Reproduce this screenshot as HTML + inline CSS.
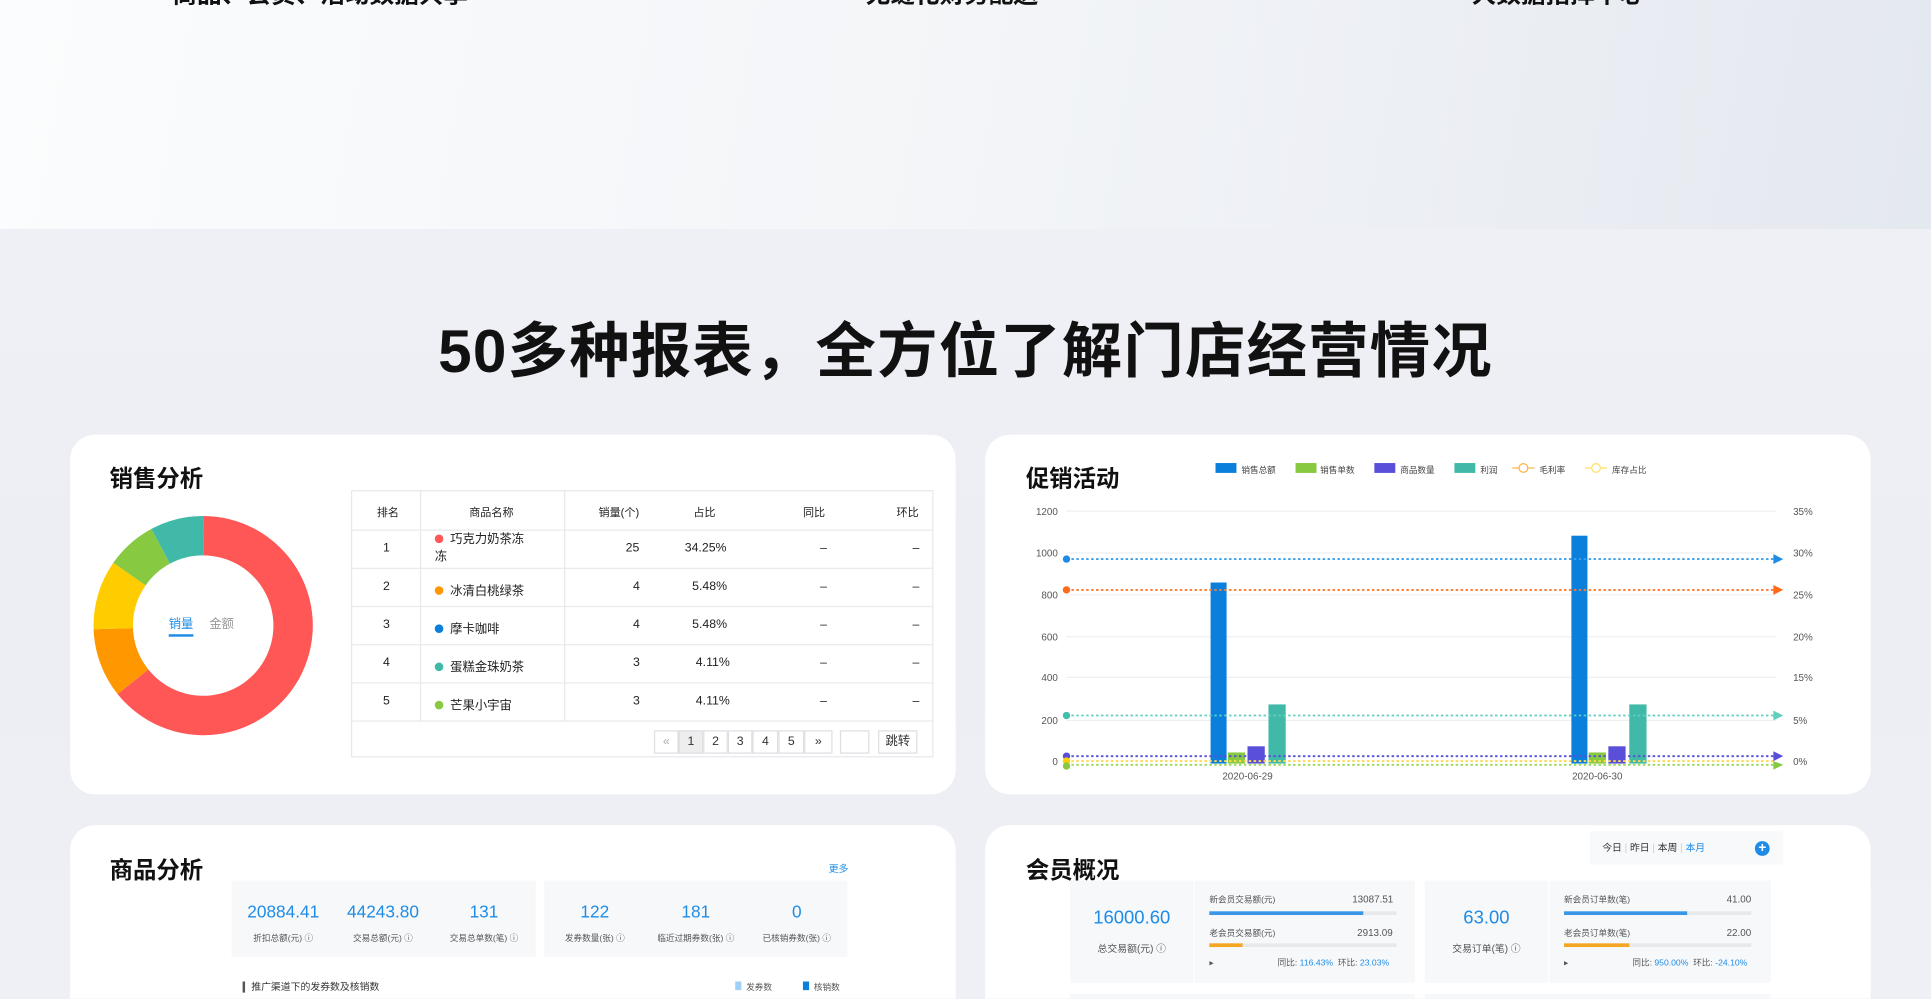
<!DOCTYPE html>
<html><head><meta charset="utf-8"><style>
html,body{margin:0;padding:0;width:1931px;height:999px;overflow:hidden;background:#eef0f5;}
*{box-sizing:border-box;}
#w{position:absolute;left:0;top:0;width:1568px;height:811px;transform:scale(1.23151);transform-origin:0 0;font-family:"Liberation Sans","Noto Sans CJK SC",sans-serif;color:#222;
background:linear-gradient(180deg,#eef0f5 186px,#eceef4 500px,#eef0f5 811px);overflow:hidden;}
.top{position:absolute;left:0;top:0;width:1568px;height:186px;background:linear-gradient(100deg,#fbfcfd 0%,#f3f5f8 50%,#e4e8ef 100%);overflow:hidden;}
.tt{position:absolute;top:-21px;font-size:20px;font-weight:bold;color:#111;}
.card{position:absolute;background:#fff;border-radius:20px;}
.ct{position:absolute;font-size:19px;font-weight:bold;color:#111;}
.abs{position:absolute;}
.tb{position:absolute;left:285px;top:398px;width:473px;height:217px;border:1px solid #e6e8eb;}
.row{position:absolute;left:0;width:471px;height:31px;border-bottom:1px solid #e8eaed;font-size:10px;}
.row span{position:absolute;top:9px;}
.dot{display:inline-block;width:7px;height:7px;border-radius:50%;}
.pg{position:absolute;top:593px;height:19px;border:1px solid #dcdfe3;font-size:10px;text-align:center;line-height:17px;color:#333;background:#fff;}
.sb{position:absolute;background:#f7f8fa;}
.num{position:absolute;color:#1e8ce6;font-size:14px;text-align:center;}
.lab{position:absolute;font-size:7px;color:#555;text-align:center;}
</style></head><body><div id="w">
<div class="top">
<div class="tt" style="left:140px">商品、会员、活动数据共享</div>
<div class="tt" style="left:703px">无缝化财务配送</div>
<div class="tt" style="left:1195px">大数据指挥中心</div>
</div>
<div class="abs" style="left:0;width:1568px;top:255px;text-align:center;font-size:49px;font-weight:bold;color:#111;letter-spacing:1px;line-height:62px">50多种报表，全方位了解门店经营情况</div>

<!-- card 1 -->
<div class="card" style="left:57px;top:353px;width:719px;height:292px"></div>
<div class="ct" style="left:89px;top:374px">销售分析</div>
<svg class="abs" style="left:0;top:0" width="780" height="650">
<g transform="translate(165,508)">
<path d="M0,-89 A89,89 0 1 1 -69.5,55.6 L-44.5,35.6 A57,57 0 1 0 0,-57Z" fill="#ff5656"/>
<path d="M-69.5,55.6 A89,89 0 0 1 -89,3 L-57,2 A57,57 0 0 0 -44.5,35.6Z" fill="#ff9800"/>
<path d="M-89,3 A89,89 0 0 1 -73,-51 L-46.7,-32.7 A57,57 0 0 0 -57,2Z" fill="#ffcc00"/>
<path d="M-73,-51 A89,89 0 0 1 -42,-78.5 L-27,-50.3 A57,57 0 0 0 -46.7,-32.7Z" fill="#87c940"/>
<path d="M-42,-78.5 A89,89 0 0 1 0,-89 L0,-57 A57,57 0 0 0 -27,-50.3Z" fill="#40b9a8"/>
</g>
<text x="137" y="510" font-size="10" fill="#1e8ce6" font-family="Liberation Sans,Noto Sans CJK SC,sans-serif">销量</text>
<rect x="137" y="515" width="20" height="2" fill="#1e8ce6"/>
<text x="170" y="510" font-size="10" fill="#999" font-family="Liberation Sans,Noto Sans CJK SC,sans-serif">金额</text>
</svg>
<div class="tb">
<div style="position:absolute;left:55px;top:0;width:1px;height:187px;background:#e6e8eb"></div>
<div style="position:absolute;left:172px;top:0;width:1px;height:187px;background:#e6e8eb"></div>
<div class="row" style="top:0;height:32px;font-size:9px"><span style="left:20px;top:10px">排名</span><span style="left:95px;top:10px">商品名称</span><span style="left:200px;top:10px">销量(个)</span><span style="left:277px;top:10px">占比</span><span style="left:366px;top:10px">同比</span><span style="left:442px;top:10px">环比</span></div>
<div class="row" style="top:32px"><span style="left:25px">1</span><span style="left:67px;top:1px;width:90px;line-height:14px"><i class="dot" style="background:#ff5656"></i>&nbsp; 巧克力奶茶冻<br>冻</span><span style="left:222px">25</span><span style="left:270px">34.25%</span><span style="left:380px">–</span><span style="left:455px">–</span></div>
<div class="row" style="top:63px"><span style="left:25px">2</span><span style="left:67px"><i class="dot" style="background:#ff9800"></i>&nbsp; 冰清白桃绿茶</span><span style="left:228px">4</span><span style="left:276px">5.48%</span><span style="left:380px">–</span><span style="left:455px">–</span></div>
<div class="row" style="top:94px"><span style="left:25px">3</span><span style="left:67px"><i class="dot" style="background:#0a7fdb"></i>&nbsp; 摩卡咖啡</span><span style="left:228px">4</span><span style="left:276px">5.48%</span><span style="left:380px">–</span><span style="left:455px">–</span></div>
<div class="row" style="top:125px"><span style="left:25px">4</span><span style="left:67px"><i class="dot" style="background:#40b9a8"></i>&nbsp; 蛋糕金珠奶茶</span><span style="left:228px">3</span><span style="left:279px">4.11%</span><span style="left:380px">–</span><span style="left:455px">–</span></div>
<div class="row" style="top:156px"><span style="left:25px">5</span><span style="left:67px"><i class="dot" style="background:#87c940"></i>&nbsp; 芒果小宇宙</span><span style="left:228px">3</span><span style="left:279px">4.11%</span><span style="left:380px">–</span><span style="left:455px">–</span></div>
</div>
<div class="pg" style="left:531px;width:20px;color:#aaa">«</div>
<div class="pg" style="left:551px;width:20px;background:#eee">1</div>
<div class="pg" style="left:571px;width:20px">2</div>
<div class="pg" style="left:591px;width:20px">3</div>
<div class="pg" style="left:611px;width:21px">4</div>
<div class="pg" style="left:632px;width:21px">5</div>
<div class="pg" style="left:653px;width:23px">»</div>
<div class="pg" style="left:682px;width:24px"></div>
<div class="pg" style="left:713px;width:32px">跳转</div>

<!-- card 2 -->
<div class="card" style="left:800px;top:353px;width:719px;height:292px"></div>
<div class="ct" style="left:833px;top:374px">促销活动</div>
<svg class="abs" style="left:0;top:0" width="1568" height="650" font-family="Liberation Sans,Noto Sans CJK SC,sans-serif" font-size="8" fill="#555">
<g font-size="7" fill="#444">
<rect x="987" y="376" width="17" height="8" fill="#0a7fdb"/><text x="1008" y="384">销售总额</text>
<rect x="1052" y="376" width="17" height="8" fill="#87c940"/><text x="1072" y="384">销售单数</text>
<rect x="1116" y="376" width="17" height="8" fill="#5a4fd8"/><text x="1137" y="384">商品数量</text>
<rect x="1181" y="376" width="17" height="8" fill="#40b9a8"/><text x="1202" y="384">利润</text>
<line x1="1228" y1="380" x2="1246" y2="380" stroke="#ffb347"/><circle cx="1237" cy="380" r="3.5" fill="#fff" stroke="#ffb347"/><text x="1250" y="384">毛利率</text>
<line x1="1287" y1="380" x2="1305" y2="380" stroke="#ffe066"/><circle cx="1296" cy="380" r="3.5" fill="#fff" stroke="#ffe066"/><text x="1309" y="384">库存占比</text>
</g>
<g stroke="#eeeff1"><line x1="866" y1="415" x2="1442" y2="415"/><line x1="866" y1="449" x2="1442" y2="449"/><line x1="866" y1="483" x2="1442" y2="483"/><line x1="866" y1="517" x2="1442" y2="517"/><line x1="866" y1="550" x2="1442" y2="550"/><line x1="866" y1="585" x2="1442" y2="585"/></g>
<g text-anchor="end"><text x="859" y="418">1200</text><text x="859" y="452">1000</text><text x="859" y="486">800</text><text x="859" y="520">600</text><text x="859" y="553">400</text><text x="859" y="588">200</text><text x="859" y="621">0</text></g>
<g><text x="1456" y="418">35%</text><text x="1456" y="452">30%</text><text x="1456" y="486">25%</text><text x="1456" y="520">20%</text><text x="1456" y="553">15%</text><text x="1456" y="588">5%</text><text x="1456" y="621">0%</text></g>
<rect x="983" y="473" width="13" height="147" fill="#0a7fdb"/>
<rect x="997" y="611" width="14" height="9" fill="#87c940"/>
<rect x="1013" y="606" width="14" height="14" fill="#5a4fd8"/>
<rect x="1030" y="572" width="14" height="48" fill="#40b9a8"/>
<rect x="1276" y="435" width="13" height="185" fill="#0a7fdb"/>
<rect x="1290" y="611" width="14" height="9" fill="#87c940"/>
<rect x="1306" y="606" width="14" height="14" fill="#5a4fd8"/>
<rect x="1323" y="572" width="14" height="48" fill="#40b9a8"/>
<g stroke-dasharray="2,2" stroke-width="1.5">
<line x1="866" y1="454" x2="1440" y2="454" stroke="#3aa0ef"/>
<line x1="866" y1="479" x2="1440" y2="479" stroke="#ff7a2e"/>
<line x1="866" y1="581" x2="1440" y2="581" stroke="#5fd0bd"/>
<line x1="866" y1="614" x2="1440" y2="614" stroke="#5a4fd8"/>
<line x1="866" y1="618" x2="1440" y2="618" stroke="#ffd84d"/>
<line x1="866" y1="621" x2="1440" y2="621" stroke="#9ad85a"/>
</g>
<circle cx="866" cy="454" r="3" fill="#1e8ce6"/><path d="M1440,450 L1448,454 L1440,458Z" fill="#1e8ce6"/>
<circle cx="866" cy="479" r="3" fill="#ff6a1a"/><path d="M1440,475 L1448,479 L1440,483Z" fill="#ff6a1a"/>
<circle cx="866" cy="581" r="3" fill="#40c0aa"/><path d="M1440,577 L1448,581 L1440,585Z" fill="#5fd0bd"/>
<circle cx="866" cy="614" r="3" fill="#5a4fd8"/><path d="M1440,610 L1448,614 L1440,618Z" fill="#5a4fd8"/>
<circle cx="866" cy="618" r="3" fill="#ffd000"/><circle cx="866" cy="622" r="3" fill="#87c940"/><path d="M1440,618 L1448,621 L1440,625Z" fill="#87c940"/>
<text x="1013" y="633" text-anchor="middle">2020-06-29</text>
<text x="1297" y="633" text-anchor="middle">2020-06-30</text>
</svg>

<!-- card 3 -->
<div class="card" style="left:57px;top:670px;width:719px;height:141px;border-radius:20px 20px 0 0"></div>
<div class="ct" style="left:89px;top:692px">商品分析</div>
<div class="abs" style="left:673px;top:700px;font-size:8px;color:#1e8ce6">更多</div>
<div class="sb" style="left:188px;top:715px;width:247px;height:62px"></div>
<div class="sb" style="left:442px;top:715px;width:246px;height:62px"></div>
<div class="num" style="left:190px;top:732px;width:80px">20884.41</div>
<div class="num" style="left:270px;top:732px;width:82px">44243.80</div>
<div class="num" style="left:352px;top:732px;width:82px">131</div>
<div class="num" style="left:442px;top:732px;width:82px">122</div>
<div class="num" style="left:524px;top:732px;width:82px">181</div>
<div class="num" style="left:606px;top:732px;width:82px">0</div>
<div class="lab" style="left:190px;top:757px;width:80px">折扣总额(元) ⓘ</div>
<div class="lab" style="left:270px;top:757px;width:82px">交易总额(元) ⓘ</div>
<div class="lab" style="left:352px;top:757px;width:82px">交易总单数(笔) ⓘ</div>
<div class="lab" style="left:442px;top:757px;width:82px">发券数量(张) ⓘ</div>
<div class="lab" style="left:524px;top:757px;width:82px">临近过期券数(张) ⓘ</div>
<div class="lab" style="left:606px;top:757px;width:82px">已核销券数(张) ⓘ</div>
<div class="abs" style="left:197px;top:797px;font-size:8px;color:#333;border-left:2px solid #555;padding-left:5px;line-height:9px">推广渠道下的发券数及核销数</div>
<div class="abs" style="left:597px;top:797px;font-size:7px;color:#555"><i style="display:inline-block;width:5px;height:7px;background:#9fd0f7"></i>&nbsp; 发券数</div>
<div class="abs" style="left:652px;top:797px;font-size:7px;color:#555"><i style="display:inline-block;width:5px;height:7px;background:#0a7fdb"></i>&nbsp; 核销数</div>

<!-- card 4 -->
<div class="card" style="left:800px;top:670px;width:719px;height:141px;border-radius:20px 20px 0 0"></div>
<div class="ct" style="left:833px;top:692px">会员概况</div>
<div class="sb" style="left:1291px;top:675px;width:157px;height:27px;background:#f8f9fa;font-size:8px;color:#333;line-height:27px;padding-left:10px">今日 <span style="color:#ccc">|</span> 昨日 <span style="color:#ccc">|</span> 本周 <span style="color:#ccc">|</span> <span style="color:#1e8ce6">本月</span></div>
<div class="abs" style="left:1425px;top:683px;width:12px;height:12px;border-radius:50%;background:#1e8ce6;color:#fff;font-size:11px;line-height:12px;text-align:center;font-weight:bold">+</div>

<div class="sb" style="left:869px;top:715px;width:280px;height:83px"></div>
<div class="abs" style="left:969px;top:715px;width:1px;height:83px;background:#fff"></div>
<div class="num" style="left:869px;top:737px;width:100px;font-size:15px">16000.60</div>
<div class="lab" style="left:869px;top:765px;width:100px;font-size:8px">总交易额(元) ⓘ</div>
<div class="abs" style="left:982px;top:726px;font-size:7px;color:#555">新会员交易额(元)</div><div class="abs" style="left:1098px;top:726px;font-size:8px;color:#555">13087.51</div>
<div class="abs" style="left:982px;top:740px;width:152px;height:3px;background:#e8e9eb"><div style="width:125px;height:3px;background:#3a97e8"></div></div>
<div class="abs" style="left:982px;top:753px;font-size:7px;color:#555">老会员交易额(元)</div><div class="abs" style="left:1102px;top:753px;font-size:8px;color:#555">2913.09</div>
<div class="abs" style="left:982px;top:766px;width:152px;height:3px;background:#e8e9eb"><div style="width:27px;height:3px;background:#f5a623"></div></div>
<div class="abs" style="left:982px;top:777px;font-size:7px;color:#555">▸ <span style="margin-left:50px">同比: <span style="color:#1e8ce6">116.43%</span> &nbsp;环比: <span style="color:#1e8ce6">23.03%</span></span></div>

<div class="sb" style="left:1157px;top:715px;width:281px;height:83px"></div>
<div class="abs" style="left:1257px;top:715px;width:1px;height:83px;background:#fff"></div>
<div class="num" style="left:1157px;top:737px;width:100px;font-size:15px">63.00</div>
<div class="lab" style="left:1157px;top:765px;width:100px;font-size:8px">交易订单(笔) ⓘ</div>
<div class="abs" style="left:1270px;top:726px;font-size:7px;color:#555">新会员订单数(笔)</div><div class="abs" style="left:1402px;top:726px;font-size:8px;color:#555">41.00</div>
<div class="abs" style="left:1270px;top:740px;width:152px;height:3px;background:#e8e9eb"><div style="width:100px;height:3px;background:#3a97e8"></div></div>
<div class="abs" style="left:1270px;top:753px;font-size:7px;color:#555">老会员订单数(笔)</div><div class="abs" style="left:1402px;top:753px;font-size:8px;color:#555">22.00</div>
<div class="abs" style="left:1270px;top:766px;width:152px;height:3px;background:#e8e9eb"><div style="width:53px;height:3px;background:#f5a623"></div></div>
<div class="abs" style="left:1270px;top:777px;font-size:7px;color:#555">▸ <span style="margin-left:50px">同比: <span style="color:#1e8ce6">950.00%</span> &nbsp;环比: <span style="color:#1e8ce6">-24.10%</span></span></div>
<div class="sb" style="left:869px;top:807px;width:280px;height:4px"></div>
<div class="sb" style="left:1157px;top:807px;width:281px;height:4px"></div>
</div></body></html>
